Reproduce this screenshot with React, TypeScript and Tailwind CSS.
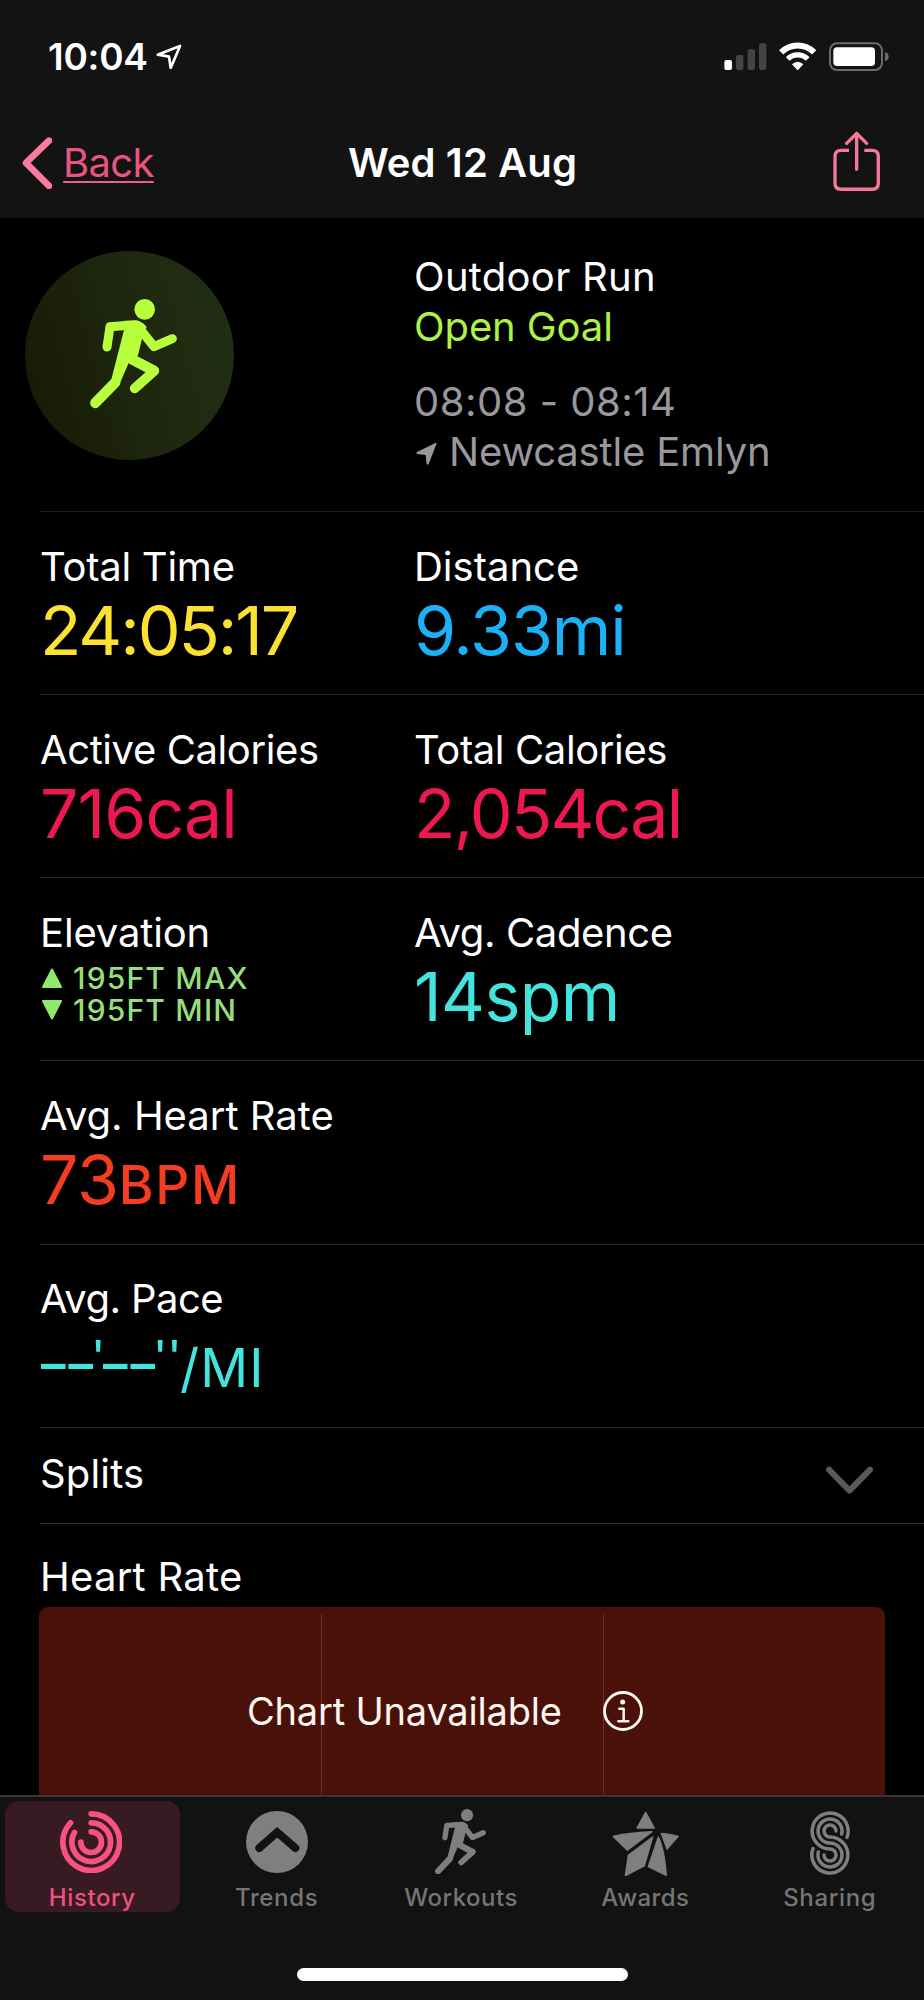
import type { ReactNode } from "react";
import clsx from "clsx";

function Runner({ className }: { className: string }) {
  return (
    <svg viewBox="270 207 261 328" preserveAspectRatio="none" className={className} fill="none" stroke="currentColor" strokeLinecap="round" strokeLinejoin="round">
      <circle cx="434" cy="238" r="31" fill="currentColor" stroke="none" />
      <path d="M321 351L330 290L408 284" strokeWidth="27" />
      <path d="M412 287L462 350L517 326" strokeWidth="27" />
      <path d="M372 272H408Q428 273 440 291L427 322L414 376L385 401L357 466L333 452L372 300Z" fill="currentColor" stroke="none" />
      <path d="M398 389L461 422" strokeWidth="32" />
      <path d="M463 423L404 475" strokeWidth="29" />
      <path d="M346 457L286 519" strokeWidth="31" />
    </svg>
  );
}

function Rings({ className }: { className: string }) {
  return (
    <svg viewBox="-93.5 -93.5 187 187" className={className} fill="none" stroke="currentColor" strokeWidth="17" strokeLinecap="round">
      <path d="M0-85A85 85 0 1 1-62-58" />
      <path d="M0-58A58 58 0 1 1-50-29" />
      <path d="M0-31A31 31 0 1 1-31 0" />
    </svg>
  );
}

function TrendsIcon({ className }: { className: string }) {
  return (
    <svg viewBox="735 93 186 186" className={className}>
      <circle cx="828" cy="186" r="93" fill="currentColor" />
      <path d="M775 204L828.500 157L883 204" fill="none" stroke="#121212" strokeWidth="24" strokeLinecap="round" />
    </svg>
  );
}

function StarIcon({ className }: { className: string }) {
  return (
    <svg viewBox="452 92 202 197" className={className} fill="currentColor" stroke="currentColor" strokeWidth="4" strokeLinejoin="round">
      <path d="M553 96L579 143H527Z" />
      <path d="M455 168Q500 157 572 154L498 210Z" />
      <path d="M574 170L549 257L492 286L501 225Z" />
      <path d="M591 170Q609 205 615 285L561 259Z" />
      <path d="M600 159Q625 160 651 168L617 206Z" />
    </svg>
  );
}

function SharingIcon({ className }: { className: string }) {
  return (
    <svg viewBox="1045 91 120 192" className={className} fill="none" stroke="currentColor" strokeWidth="10.500" strokeLinecap="round">
      <path d="M1156 170A54 54 0 1 0 1105 205A18 18 0 1 1 1087 223" />
      <path d="M1140 160A36 36 0 1 0 1105 187A36 36 0 1 1 1070 214" />
      <path d="M1123 151A18 18 0 1 0 1105 169A54 54 0 1 1 1054 204" />
    </svg>
  );
}

function StatusBar() {
  return (
    <div className="flex h-[105px] items-start pl-[48px] pr-[35px]">
      <div className="mt-[32.500px] text-[37px] leading-[48px] font-semibold tracking-[-0.24px]">10:04</div>
      <svg viewBox="470 131 77 77" className="mt-[43.500px] ml-[8.700px] h-[25.700px] w-[25.700px]" fill="none" stroke="currentColor" strokeWidth="8" strokeLinejoin="round">
        <path d="M475 163L542 137L514 203L509 169Z" />
      </svg>
      <svg viewBox="786 126 495 88" className="mt-[42px] ml-auto h-[29.333px] w-[165px]" fill="#fff">
        <rect x="787" y="180" width="23" height="30" rx="6" />
        <g fill="#444">
          <rect x="822" y="165" width="22" height="45" rx="6" />
          <rect x="857" y="148" width="22" height="62" rx="6" />
          <rect x="891" y="130" width="22" height="80" rx="6" />
        </g>
        <g fill="none" stroke="#fff">
          <path d="M957.500 157A69.500 69.500 0 0 1 1056.500 157" strokeWidth="18" />
          <path d="M977 177A42 42 0 0 1 1037 177" strokeWidth="16" />
        </g>
        <path d="M990 193Q1007 177 1024 193L1009 209Q1007 211 1005 209Z" />
        <rect x="1104" y="130" width="156" height="80" rx="21" fill="none" stroke="#6c6c6c" strokeWidth="6" />
        <rect x="1114" y="142" width="125" height="56" rx="11" />
        <path d="M1269 156Q1280 160 1280 170T1269 184Z" fill="#6c6c6c" />
      </svg>
    </div>
  );
}

function NavBar() {
  return (
    <div className="grid h-[113px] grid-cols-[1fr_auto_1fr] items-start">
      <div className="flex">
        <svg viewBox="65 410 92 158" className="mt-[31.500px] ml-[21.500px] h-[52.600px] w-[30.600px] text-[#f97b9d]" fill="none" stroke="currentColor" strokeWidth="20" strokeLinecap="round" strokeLinejoin="round">
          <path d="M146 421L77 488L146 557" />
        </svg>
        <a className="mt-[32.500px] ml-[11px] text-[40px] leading-[50px] tracking-[-0.700px] text-[#e8557f] underline decoration-[#ea6088] decoration-2 underline-offset-[4px] [text-decoration-skip-ink:none]">Back</a>
      </div>
      <h1 className="mt-[32.500px] ml-px text-[40px] leading-[50px] font-semibold tracking-[0.110px]">Wed 12 Aug</h1>
      <svg viewBox="1112 392 142 182" className="mt-[25.700px] mr-[44px] h-[60.600px] w-[47.300px] justify-self-end text-[#f5799b]" fill="none" stroke="currentColor" strokeWidth="10" strokeLinejoin="round">
        <path d="M1160 450H1136Q1118 450 1118 468V549Q1118 567 1136 567H1230Q1248 567 1248 549V468Q1248 450 1230 450H1206" />
        <path d="M1183 400V507M1153 429L1183 399L1213 429" strokeLinecap="round" />
      </svg>
    </div>
  );
}

function Summary() {
  return (
    <section className="flex h-[293px]">
      <div className="mt-[33px] ml-[25px] h-[209px] w-[209px] shrink-0 rounded-full bg-[linear-gradient(75deg,#191b06_10%,#1e270d_50%,#222f15_95%)] pt-[48.300px] pl-[65px] text-[#b8ff3c]">
        <Runner className="h-[109.300px] w-[87px]" />
      </div>
      <div className="mt-[34px] ml-[180px] text-[40px] leading-[50px] whitespace-nowrap">
        <div className="tracking-[0.290px]">Outdoor Run</div>
        <div className="tracking-[-0.100px] text-[#adf244]">Open Goal</div>
        <div className="mt-[24.500px] tracking-[0.490px] text-[#98989d]">08:08 - 08:14</div>
        <div className="flex text-[#98989d]">
          <svg viewBox="46 635 63 70" className="mt-[15.500px] ml-[1.500px] h-[23.300px] w-[21px]" fill="currentColor">
            <path d="M48 666L104 638Q109 636 107 642L84 701Q80 706 78 701L75 674L50 671Q46 670 48 666Z" />
          </svg>
          <span className="ml-[12.500px] tracking-[-0.170px]">Newcastle Emlyn</span>
        </div>
      </div>
    </section>
  );
}

function Stat({ label, labelClass, value, valueClass }: { label: string; labelClass?: string; value: ReactNode; valueClass?: string }) {
  return (
    <div className="pt-[30px] whitespace-nowrap">
      <div className={clsx("text-[40px] leading-[50px]", labelClass)}>{label}</div>
      <div className={clsx("mt-[3px] text-[68px] leading-[70px]", valueClass)}>{value}</div>
    </div>
  );
}

function Row({ className, children }: { className: string; children: ReactNode }) {
  return <section className={clsx("ml-[40px] grid grid-cols-[374px_1fr] border-b border-[#262627]", className)}>{children}</section>;
}

function Elevation() {
  return (
    <div className="pt-[30px] whitespace-nowrap">
      <div className="text-[40px] leading-[50px] tracking-[-0.150px]">Elevation</div>
      <div className="mt-[4px] ml-[2px] text-[30px] leading-[32px] font-medium tracking-[1.200px] text-[#97dd7b]">
        <div className="flex items-center gap-[11px]">
          <svg viewBox="0 0 20 20" className="h-[20px] w-[20px] text-[#8fe867]" fill="currentColor" stroke="currentColor" strokeWidth="2" strokeLinejoin="round"><path d="M10 1.500L19 19H1Z" /></svg>
          195FT MAX
        </div>
        <div className="flex items-center gap-[11px]">
          <svg viewBox="0 0 20 20" className="h-[20px] w-[20px] text-[#8fe867]" fill="currentColor" stroke="currentColor" strokeWidth="2" strokeLinejoin="round"><path d="M10 18.500L19 1H1Z" /></svg>
          195FT MIN
        </div>
      </div>
    </div>
  );
}

function Dashes() {
  return (
    <span className="inline-flex w-[52px] justify-between align-[6px] text-[49px] leading-none font-semibold">
      <span>–</span>
      <span>–</span>
    </span>
  );
}

function Pace() {
  return (
    <span className="block h-[70px] pl-px leading-[70px] tracking-normal">
      <Dashes />
      <span className="inline-block w-[10px] align-[10px] font-['Liberation_Sans'] text-[54px] leading-none">'</span>
      <Dashes />
      <span className="inline-flex w-[25px] align-[10px] font-['Liberation_Sans'] text-[54px] leading-none tracking-[4px]">''</span>
      <span className="text-[53px] leading-none tracking-[1.200px]">/MI</span>
    </span>
  );
}

function HeartRateChart() {
  return (
    <div className="relative ml-[39px] grid h-[189px] w-[845.500px] grid-cols-[282px_282px_1fr] rounded-t-[9px] bg-[#4a1108] pt-[7px]">
      <div />
      <div className="border-l border-[#66302a]" />
      <div className="border-l border-[#66302a]" />
      <div className="absolute top-[79px] left-[208px] flex items-start text-[38px] leading-[50px] tracking-[-0.190px] whitespace-nowrap text-[#fff6f2]">
        Chart Unavailable
        <svg viewBox="0 0 120 120" className="absolute top-[5px] left-[356px] h-[40px] w-[40px]" fill="none" stroke="currentColor">
          <circle cx="60" cy="60" r="55.500" strokeWidth="8.500" />
          <circle cx="59" cy="33" r="7.500" fill="currentColor" stroke="none" />
          <path d="M49 53H62V91M46 91H76" strokeWidth="7.500" strokeLinecap="round" strokeLinejoin="round" />
        </svg>
      </div>
    </div>
  );
}

function Tab({ label, labelClass, active, children }: { label: string; labelClass: string; active?: boolean; children: ReactNode }) {
  return (
    <div className={clsx("mt-[3.500px] h-[111px] w-[175px] rounded-[14px]", active ? "bg-[#371a22] text-[#fa5184]" : "text-[#7f7f7f]")}>
      <div className="flex h-[82px] justify-center">{children}</div>
      <div className={clsx("text-center text-[24px] leading-[30px] font-medium", active ? "text-[#ee4f7f]" : "text-[#757575]", labelClass)}>{label}</div>
    </div>
  );
}

export default function App() {
  return (
    <div className="flex h-[2000px] w-[924px] flex-col overflow-hidden bg-black font-['Inter','Liberation_Sans',sans-serif] text-white">
      <header className="h-[218px] shrink-0 bg-[#131313]">
        <StatusBar />
        <NavBar />
      </header>
      <main className="h-[1577px] shrink-0 overflow-hidden">
        <Summary />
        <div className="ml-[40px] h-px bg-[#1e1e20]" />
        <Row className="h-[183px]">
          <Stat label="Total Time" labelClass="tracking-[-0.250px]" value="24:05:17" valueClass="tracking-[-2.100px] text-[#fbe232]" />
          <Stat label="Distance" value="9.33mi" valueClass="tracking-[-1.100px] text-[#1cb1f7]" />
        </Row>
        <Row className="h-[183px]">
          <Stat label="Active Calories" labelClass="tracking-[-0.400px]" value="716cal" valueClass="tracking-[-0.940px] text-[#ee1850]" />
          <Stat label="Total Calories" labelClass="tracking-[-0.390px]" value="2,054cal" valueClass="tracking-[-1.780px] text-[#ee1850]" />
        </Row>
        <Row className="h-[183px]">
          <Elevation />
          <Stat label="Avg. Cadence" labelClass="tracking-[-0.380px]" value="14spm" valueClass="tracking-[-0.600px] text-[#44e4de]" />
        </Row>
        <Row className="h-[184px]">
          <Stat label="Avg. Heart Rate" value={<>73<span className="text-[53px] font-medium tracking-[1.800px]">BPM</span></>} valueClass="tracking-[-0.350px] text-[#f43c20]" />
        </Row>
        <Row className="h-[183px]">
          <Stat label="Avg. Pace" labelClass="-mt-px tracking-[-0.560px]" value={<Pace />} valueClass="text-[#44e4de]" />
        </Row>
        <section className="ml-[40px] flex h-[96px] justify-between border-b border-[#303132]">
          <h2 className="mt-[21px] text-[40px] leading-[50px] tracking-[0.150px]">Splits</h2>
          <svg viewBox="1092 139 142 85" className="mt-[38.300px] mr-[50.700px] h-[28.300px] w-[47.300px] text-[#5a5a5e]" fill="none" stroke="currentColor" strokeWidth="18" strokeLinecap="round" strokeLinejoin="round">
            <path d="M1101 150L1162.500 213L1224 150" />
          </svg>
        </section>
        <h2 className="ml-[40px] h-[83px] pt-[28px] text-[40px] leading-[50px] tracking-[0.260px]">Heart Rate</h2>
        <HeartRateChart />
      </main>
      <footer className="flex h-[205px] shrink-0 flex-col border-t-2 border-[#3b3536] bg-[#121212]">
        <nav className="grid h-[171px] grid-cols-5 justify-items-center pr-[2px]">
          <Tab label="History" labelClass="tracking-[0.560px]" active><Rings className="mt-[10.500px] -ml-[2px] h-[62.300px] w-[62.300px]" /></Tab>
          <Tab label="Trends" labelClass="tracking-[0.640px]"><TrendsIcon className="mt-[10.500px] h-[62px] w-[62px]" /></Tab>
          <Tab label="Workouts" labelClass="tracking-[0.500px]"><Runner className="mt-[8.500px] h-[65.300px] w-[51px]" /></Tab>
          <Tab label="Awards" labelClass="tracking-[0.430px]"><StarIcon className="mt-[10.300px] h-[65.700px] w-[67.300px]" /></Tab>
          <Tab label="Sharing" labelClass="tracking-[0.680px]"><SharingIcon className="mt-[10px] h-[64px] w-[40px]" /></Tab>
        </nav>
        <div className="mx-auto h-[12.500px] w-[331px] rounded-full bg-white" />
      </footer>
    </div>
  );
}
